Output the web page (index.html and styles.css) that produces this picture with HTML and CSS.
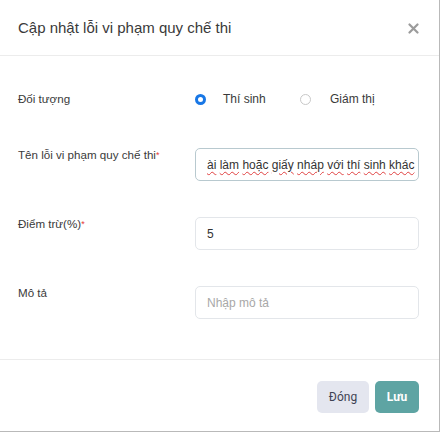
FILE: index.html
```html
<!DOCTYPE html>
<html lang="vi">
<head>
  <meta charset="UTF-8">
  <title>Cập nhật lỗi vi phạm quy chế thi</title>
  <link rel="stylesheet" href="styles.css">
</head>
<body>
  <div class="modal">
    <div class="modal-header">
      <h2>Cập nhật lỗi vi phạm quy chế thi</h2>
      <span class="close">
        <svg width="11" height="11" viewBox="0 0 11 11"><path d="M1.5 1.5l8 8M9.5 1.5l-8 8" stroke="#9b9b9b" stroke-width="2.2" stroke-linecap="round"/></svg>
      </span>
    </div>

    <div class="modal-body">
      <!-- Đối tượng -->
      <div class="row row-radio">
        <div class="label">Đối tượng</div>
        <div class="radios">
          <label class="radio"><span class="dot checked"></span>Thí sinh</label>
          <label class="radio"><span class="dot"></span>Giám thị</label>
        </div>
      </div>

      <!-- Tên lỗi -->
      <div class="row">
        <div class="label">Tên lỗi vi phạm quy chế thi<span class="req">*</span></div>
        <div class="input focused">
          <span class="value"><span class="sp">ài</span> <span class="sp">làm</span> <span class="sp">hoặc</span> <span class="sp">giấy</span> <span class="sp">nháp</span> <span class="sp">với</span> <span class="sp">thí</span> <span class="sp">sinh</span> <span class="sp">khác</span></span><span class="caret"></span>
        </div>
      </div>

      <!-- Điểm trừ -->
      <div class="row">
        <div class="label">Điểm trừ(%)<span class="req">*</span></div>
        <div class="input">5</div>
      </div>

      <!-- Mô tả -->
      <div class="row">
        <div class="label">Mô tả</div>
        <div class="input placeholder">Nhập mô tả</div>
      </div>
    </div>

    <div class="modal-footer">
      <button class="btn btn-light">Đóng</button>
      <button class="btn btn-primary">Lưu</button>
    </div>
  </div>
</body>
</html>
```

FILE: styles.css
```css
body {
  margin: 0;
  font-family: "Liberation Sans", Arial, sans-serif;
  background: #fff;
  color: #333;
}
.modal {
  width: 439px;
  height: 431px;
  border-right: 1px solid #b9b9b9;
  border-bottom: 1px solid #b9b9b9;
  background: #fff;
  display: flex;
  flex-direction: column;
}
.modal-header {
  height: 55px;
  border-bottom: 1px solid #ececec;
  display: flex;
  align-items: center;
  justify-content: space-between;
  padding: 0 20px 0 18px;
}
.modal-header h2 {
  margin: 0;
  font-size: 15px;
  font-weight: normal;
  color: #3a3a3a;
}
.close {
  display: flex;
  margin-top: 1px;
}
.modal-body {
  flex: 1;
  padding: 36px 20px 0 18px;
}
.row {
  display: grid;
  grid-template-columns: 177px 1fr;
  align-items: start;
  margin-bottom: 36px;
}
.row-radio {
  margin-bottom: 42px;
}
.label {
  font-size: 11.6px;
  line-height: 14px;
  color: #3a3a3a;
}
.req {
  color: #e53935;
  font-size: 9px;
  vertical-align: top;
}
.radios {
  display: flex;
}
.radio {
  display: flex;
  align-items: center;
  font-size: 12px;
  line-height: 14px;
  color: #3a3a3a;
  width: 105px;
}
.dot {
  width: 11px;
  height: 11px;
  box-sizing: border-box;
  border-radius: 50%;
  border: 1px solid #c8c8c8;
  margin-right: 17px;
}
.dot.checked {
  border: 3.5px solid #1877e6;
}
.radio + .radio .dot {
  margin-right: 19px;
}
.input {
  height: 33px;
  box-sizing: border-box;
  border: 1px solid #e3e6ea;
  border-radius: 5px;
  padding: 0 11px;
  display: flex;
  align-items: center;
  font-size: 12px;
  color: #333;
}
.input.focused {
  border-color: #b8c9cf;
  white-space: nowrap;
  overflow: hidden;
}
.sp {
  text-decoration: underline wavy #e04040;
  text-decoration-thickness: 1px;
  text-underline-offset: 2px;
}
.caret {
  display: inline-block;
  width: 1px;
  height: 15px;
  background: #333;
  margin-left: 1px;
}
.placeholder {
  color: #a8a8a8;
}
.modal-footer {
  border-top: 1px solid #ececec;
  padding: 21px 20px 18px;
  display: flex;
  justify-content: flex-end;
  gap: 6px;
}
.btn {
  height: 32px;
  border: none;
  border-radius: 5px;
  font-family: Roboto, "Liberation Sans", sans-serif;
  font-size: 12px;
  cursor: pointer;
}
.btn-light {
  width: 52px;
  background: #e4e6ef;
  color: #3f4254;
  font-weight: normal;
}
.btn-primary {
  width: 44px;
  background: #5ea4a3;
  color: #fff;
  font-weight: bold;
}
```
